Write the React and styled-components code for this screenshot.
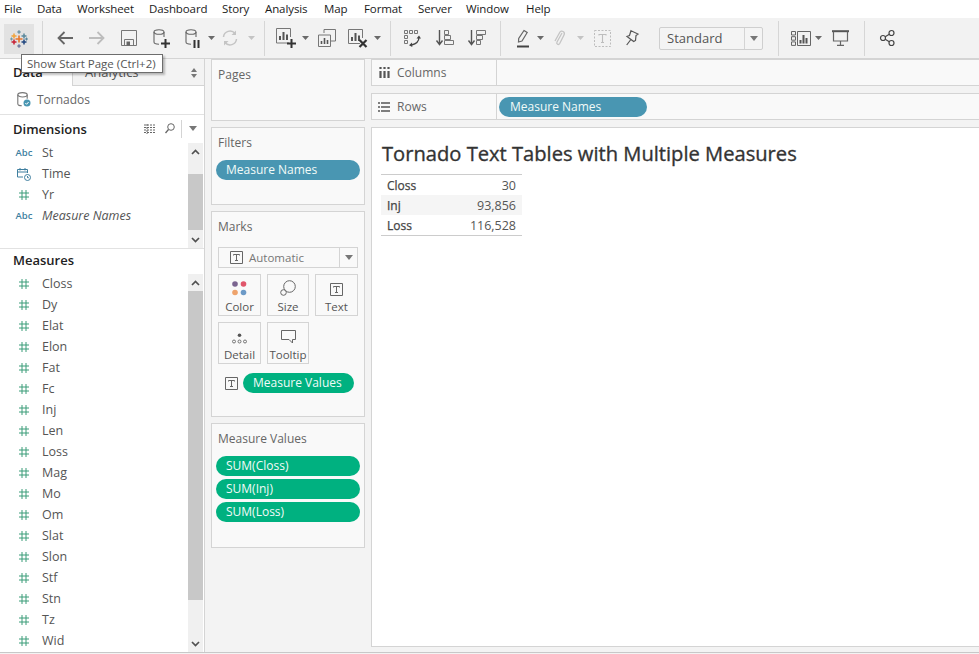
import React from 'react';
import styled, { createGlobalStyle } from 'styled-components';

const Global = createGlobalStyle`
html, body { margin: 0; padding: 0; background: #fff; }
body { font-family: "Open Sans", "Noto Sans", Arial, sans-serif; color: #555; overflow: hidden; }
* { box-sizing: border-box; }
`;

const Page = styled.div`
width: 979px;
height: 654px;
display: flex;
flex-direction: column;
overflow: hidden;
position: relative;
`;

const MenuBar = styled.div`
height: 18px;
flex: none;
display: flex;
align-items: center;
background: #fff;
padding-left: 4px;
`;

const MenuItem = styled.span`
width: ${p => p.$w}px;
font-size: 11.5px;
letter-spacing: -0.1px;
line-height: 18px;
color: #1a1a1a;
white-space: nowrap;
`;

const Toolbar = styled.div`
height: 41px;
flex: none;
display: flex;
align-items: center;
background: #f2f2f2;
padding-left: 4px;
border-bottom: 1px solid #d4d4d4;
`;

const LogoButton = styled.div`
width: 30px;
height: 30px;
margin-top: 1px;
background: #e2e2e2;
display: flex;
align-items: center;
justify-content: center;
`;

const ToolSep = styled.div`
width: 1px;
height: 35px;
flex: none;
margin-left: ${p => p.$ml}px;
background: #d6d6d6;
`;

const Tool = styled.div`
flex: none;
width: ${p => p.$w}px;
margin-left: ${p => p.$ml}px;
height: 24px;
display: flex;
align-items: center;
justify-content: center;
svg { display: block; overflow: visible; }
`;

const Caret = styled.div`
flex: none;
margin-left: ${p => p.$ml}px;
width: 7px;
height: 4px;
clip-path: polygon(0 0, 100% 0, 50% 100%);
background: ${p => (p.$off ? '#c4c4c4' : '#6a6a6a')};
`;

const Select = styled.div`
flex: none;
margin-left: 20px;
width: 104px;
height: 23px;
display: flex;
align-items: center;
background: #f4f4f4;
border: 1px solid #cfcfcf;
border-radius: 2px;
font-size: 13px;
color: #555;
`;

const SelectLabel = styled.span`
flex: 1;
padding-left: 7px;
`;

const SelectArrow = styled.div`
width: 18px;
height: 100%;
border-left: 1px solid #d4d4d4;
display: flex;
align-items: center;
justify-content: center;
`;

const Tip = styled.div`
position: absolute;
left: 21px;
top: 54px;
width: 142px;
height: 19px;
background: #fff;
border: 1px solid #6d6d6d;
box-shadow: 2px 2px 2px rgba(0, 0, 0, 0.25);
font-size: 11.5px;
line-height: 17px;
padding-left: 5px;
color: #555;
white-space: nowrap;
z-index: 5;
`;

const Body = styled.div`
flex: 1;
min-height: 0;
display: flex;
`;

const Side = styled.div`
width: 205px;
flex: none;
display: flex;
flex-direction: column;
background: #fff;
border-right: 1px solid #d4d4d4;
`;

const Tabs = styled.div`
height: 27px;
flex: none;
display: flex;
`;

const DataTab = styled.div`
width: 72px;
padding: 4px 0 0 13px;
font-size: 13px;
font-weight: 600;
color: #222;
`;

const AnalyticsTab = styled.div`
flex: 1;
display: flex;
justify-content: space-between;
padding: 4px 7px 0 12px;
background: #f3f3f3;
border-left: 1px solid #d4d4d4;
border-bottom: 1px solid #d4d4d4;
font-size: 13px;
color: #555;
`;

const SourceRow = styled.div`
height: 29px;
flex: none;
display: flex;
align-items: center;
padding: 0 0 2px 17px;
gap: 6px;
font-size: 12px;
color: #666;
border-bottom: 1px solid #e2e2e2;
`;

const SectionHead = styled.div`
height: ${p => p.$h}px;
flex: none;
display: flex;
align-items: center;
padding: 0 0 ${p => p.$pb || 0}px 13px;
font-size: 13px;
font-weight: 600;
color: #222;
`;

const HeadTools = styled.div`
margin-left: auto;
display: flex;
align-items: center;
gap: 9px;
padding-right: 7px;
`;

const HeadSep = styled.div`
width: 1px;
height: 18px;
background: #d4d4d4;
margin: 0 -2px 0 -3px;
`;

const ListWrap = styled.div`
height: ${p => p.$h}px;
flex: none;
display: flex;
border-bottom: ${p => (p.$line ? '1px solid #e2e2e2' : 'none')};
`;

const List = styled.div`
flex: 1;
padding-top: ${p => p.$top}px;
`;

const Field = styled.div`
height: 21px;
display: flex;
align-items: center;
font-size: 12.5px;
color: #555;
font-style: ${p => (p.$italic ? 'italic' : 'normal')};
`;

const FieldIcon = styled.div`
width: 42px;
flex: none;
display: flex;
justify-content: center;
padding-left: 6px;
`;

const AbcIcon = styled.span`
font-size: 9.5px;
font-style: normal;
font-weight: 600;
color: #3f7f9f;
`;

const Scrollbar = styled.div`
width: 15px;
flex: none;
margin-top: ${p => p.$mt}px;
margin-right: 1px;
display: flex;
flex-direction: column;
background: #f0f0f0;
`;

const ScrollBtn = styled.div`
height: 17px;
flex: none;
display: flex;
align-items: center;
justify-content: center;
`;

const ScrollThumb = styled.div`
background: #c8c8c8;
height: ${p => p.$h}px;
margin-top: ${p => p.$top}px;
flex: none;
`;

const ScrollFill = styled.div`
flex: 1;
`;

const Middle = styled.div`
width: 166px;
flex: none;
background: #f3f3f3;
padding: 0 6px;
display: flex;
flex-direction: column;
gap: 6px;
`;

const Card = styled.div`
height: ${p => p.$h}px;
flex: none;
background: #f9f9f9;
border: 1px solid #d4d4d4;
padding: 6px 4px 0;
`;

const CardTitle = styled.div`
font-size: 12px;
line-height: 17px;
color: #666;
padding-left: 2px;
margin-bottom: ${p => p.$mb || 0}px;
`;

const Pill = styled.div`
height: 20px;
width: ${p => (p.$w ? p.$w + 'px' : '100%')};
flex: none;
border-radius: 10px;
background: ${p => (p.$green ? '#00b180' : '#4996b2')};
color: #f2fbf8;
font-size: 12px;
line-height: 20px;
padding-left: ${p => p.$pl || 10}px;
white-space: nowrap;
`;

const PillStack = styled.div`
display: flex;
flex-direction: column;
gap: 3px;
`;

const MarkSelect = styled.div`
height: 21px;
margin: 0 2px;
display: flex;
align-items: center;
background: #f9f9f9;
border: 1px solid #d4d4d4;
font-size: 11.5px;
color: #777;
`;

const MarkSelectLabel = styled.div`
flex: 1;
display: flex;
align-items: center;
gap: 6px;
padding-left: 11px;
`;

const MarkGrid = styled.div`
margin: 6px 2px 0;
display: grid;
grid-template-columns: 43px 42px 43px;
grid-auto-rows: 42px;
column-gap: 6px;
row-gap: 6px;
`;

const MarkBtn = styled.div`
border: 1px solid #d4d4d4;
display: flex;
flex-direction: column;
align-items: center;
justify-content: flex-end;
font-size: 11.5px;
line-height: 16px;
color: #555;
svg { display: block; margin-bottom: 3px; }
`;

const MarkPillRow = styled.div`
margin-top: 9px;
display: flex;
align-items: center;
padding-left: 9px;
gap: 5px;
`;

const Main = styled.div`
flex: 1;
min-width: 0;
display: flex;
flex-direction: column;
background: #f3f3f3;
gap: 7px;
`;

const Shelf = styled.div`
height: 27px;
flex: none;
display: flex;
background: #f9f9f9;
border-top: 1px solid #d4d4d4;
border-bottom: 1px solid #d4d4d4;
border-left: 1px solid #d4d4d4;
`;

const ShelfLabel = styled.div`
width: 125px;
flex: none;
display: flex;
align-items: center;
gap: 7px;
padding-left: ${p => p.$pl}px;
font-size: 12px;
color: #666;
border-right: 1px solid #d4d4d4;
`;

const ShelfBody = styled.div`
flex: 1;
display: flex;
align-items: center;
padding-left: 2px;
`;

const Canvas = styled.div`
height: 520px;
flex: none;
background: #fff;
border: 1px solid #d4d4d4;
border-right: none;
padding: 13px 0 0 10px;
`;

const Title = styled.div`
font-size: 20.15px;
line-height: 24px;
-webkit-text-stroke: 0.35px #333;
color: #333;
white-space: nowrap;
`;

const Table = styled.div`
width: 141px;
margin: 9px 0 0 -1px;
border-top: 1px solid #ccc;
border-bottom: 1px solid #ccc;
`;

const Row = styled.div`
height: 20px;
display: flex;
justify-content: space-between;
align-items: center;
padding: 0 6px;
font-size: 12.5px;
background: ${p => (p.$alt ? '#f5f5f5' : '#fff')};
color: #555;
`;

const RowName = styled.span`
font-size: 12px;
-webkit-text-stroke: 0.25px #444;
color: #444;
`;

const Footer = styled.div`
height: 2px;
flex: none;
background: #f3f3f3;
border-top: 1px solid #c8c8c8;
`;

const Cross = ({ x, y, c, s = 3, w = 1.5 }) => (
  <path d={`M${x - s} ${y}H${x + s}M${x} ${y - s}V${y + s}`} stroke={c} strokeWidth={w} fill="none" />
);

const Logo = () => (
  <svg width="18" height="18" viewBox="0 0 18 18">
    <Cross x={9} y={9} c="#e8762b" s={3.5} w={1.6} />
    <Cross x={4} y={6} c="#f2a33a" s={2.5} />
    <Cross x={14} y={6} c="#59879b" s={2.5} />
    <Cross x={4} y={12} c="#c72035" s={2.5} />
    <Cross x={14} y={12} c="#1f447e" s={2.5} />
    <Cross x={9} y={2} c="#5b879b" s={1.8} w={1.2} />
    <Cross x={9} y={16} c="#5b6591" s={1.8} w={1.2} />
    <Cross x={1.5} y={9} c="#7099a6" s={1.5} w={1.1} />
    <Cross x={16.5} y={9} c="#5b879b" s={1.5} w={1.1} />
  </svg>
);

const Back = () => (
  <svg width="16" height="14" viewBox="0 0 16 14"><path d="M16 7H1.5M7.5 1L1.5 7l6 6" fill="none" stroke="#666" strokeWidth="1.8" /></svg>
);
const Forward = () => (
  <svg width="16" height="14" viewBox="0 0 16 14"><path d="M0 7h14.5M8.5 1l6 6-6 6" fill="none" stroke="#bdbdbd" strokeWidth="1.8" /></svg>
);
const Save = () => (
  <svg width="16" height="16" viewBox="0 0 16 16"><path d="M.5.5h15v15H.5z" fill="none" stroke="#777" /><path d="M3.5 15.5v-6h9v6" fill="none" stroke="#777" /><path d="M5.5 11.500H9v4H5.5z" fill="#666" /></svg>
);
const Cyl = () => (
  <g fill="none" stroke="#666" strokeWidth="1.1">
    <ellipse cx="6" cy="3" rx="5" ry="2.3" />
    <path d="M1 3v10c0 1.3 2 2.2 5 2.2M11 3v5" />
  </g>
);
const NewSource = () => (
  <svg width="17" height="19" viewBox="0 0 17 19"><Cyl /><path d="M8 14.5h9M12.5 10v9" stroke="#333" strokeWidth="2" /></svg>
);
const PauseSource = () => (
  <svg width="17" height="19" viewBox="0 0 17 19"><Cyl /><path d="M9.5 11v8M13.5 11v8" stroke="#333" strokeWidth="2" /></svg>
);
const Refresh = () => (
  <svg width="16" height="16" viewBox="0 0 16 16"><path d="M1.5 7A6.500 6.500 0 0 1 13 3.5M14.5 9A6.500 6.500 0 0 1 3 12.5" fill="none" stroke="#c4c4c4" strokeWidth="1.5" /><path d="M14 .5V5H9.5zM2 15.5V11h4.500z" fill="#c4c4c4" /></svg>
);
const NewSheet = () => (
  <svg width="20" height="20" viewBox="0 0 20 20"><path d="M13 15H.5V.5h14V9" fill="none" stroke="#777" /><path d="M4 12V8M7.5 12V4M11 12V6.500" stroke="#555" strokeWidth="2" /><path d="M11 15.5h9M15.5 11v9" stroke="#333" strokeWidth="2" /></svg>
);
const Duplicate = () => (
  <svg width="18" height="18" viewBox="0 0 18 18"><path d="M6 4V.5h11.500V12H13" fill="none" stroke="#777" /><path d="M.5 6h12v11.500H.5z" fill="#f2f2f2" stroke="#777" /><path d="M3.5 15v-3M6.5 15V9M9.5 15v-4" stroke="#555" strokeWidth="1.6" /></svg>
);
const ClearSheet = () => (
  <svg width="19" height="19" viewBox="0 0 19 19"><path d="M12 14.5H.5V.5h14V9" fill="none" stroke="#777" /><path d="M4 12V8M7.5 12V4M11 12V6.500" stroke="#555" strokeWidth="2" /><path d="M11.5 11l7 7M18.5 11l-7 7" stroke="#333" strokeWidth="2.2" /></svg>
);
const Swap = () => (
  <svg width="17" height="17" viewBox="0 0 17 17">
    <g fill="none" stroke="#777" strokeWidth="1">
      <path d="M.5.5h3v3h-3zM5.5.5h3v3h-3zM10.5.5h3v3h-3zM.5 5.5h3v3h-3zM.5 10.5h3v3h-3z" />
    </g>
    <path d="M15 7c0 4-3 7-7.500 8" fill="none" stroke="#444" strokeWidth="1.3" />
    <path d="M12.5 8.5L15 5.5l2 3zM8 12.5l-3 2.800 3.300 1.700z" fill="#444" />
  </svg>
);
const SortAsc = () => (
  <svg width="18" height="16" viewBox="0 0 18 16"><path d="M3.5 0v14M.5 10.5l3 4 3-4" fill="none" stroke="#555" strokeWidth="1.4" /><path d="M8.5.5h4v4h-4zM8.5 5.5h6v4h-6zM8.5 10.5h9v4h-9z" fill="none" stroke="#777" /></svg>
);
const SortDesc = () => (
  <svg width="18" height="16" viewBox="0 0 18 16"><path d="M3.5 0v14M.5 10.5l3 4 3-4" fill="none" stroke="#555" strokeWidth="1.4" /><path d="M8.5.5h9v4h-9zM8.5 5.5h6v4h-6zM8.5 10.5h4v4h-4z" fill="none" stroke="#777" /></svg>
);
const Highlighter = () => (
  <svg width="13" height="19" viewBox="0 0 13 19"><path d="M7 1.5l3.200 2L5 12l-3.500 1 .2-3.500z" fill="none" stroke="#666" strokeWidth="1.2" /><path d="M0 17.5h12" stroke="#444" strokeWidth="2" /></svg>
);
const Clip = () => (
  <svg width="11" height="18" viewBox="0 0 11 18"><path d="M8 4L3 13c-1 2 1.500 3.500 2.700 1.500L10 6c1.500-3-2.500-5.500-4.300-2.500L1 12" fill="none" stroke="#c4c4c4" strokeWidth="1.3" /></svg>
);
const TextBox = () => (
  <svg width="17" height="17" viewBox="0 0 17 17"><path d="M.5.5h16v16H.5z" fill="none" stroke="#bdbdbd" strokeDasharray="2 1.5" /><path d="M5 5.5v-1h7v1M8.5 4.500v8M7 12.500h3" fill="none" stroke="#bdbdbd" strokeWidth="1.1" /></svg>
);
const Pin = () => (
  <svg width="13" height="16" viewBox="0 0 13 16"><path d="M5 .7l7 3.300-2 1.500-.5 5-1.800 1L3 8 1 6.500l2.500-1zM4.500 10L.7 15" fill="none" stroke="#555" strokeWidth="1.2" /></svg>
);
const ShowMe = () => (
  <svg width="20" height="15" viewBox="0 0 20 15"><path d="M.5.5h4V4h-4zM.5 5.700h4v3.500h-4zM.5 10.900h4v3.500h-4zM6.500.5h13v14h-13z" fill="none" stroke="#666" /><path d="M9.500 12.500V9M12.500 12.500V4M15.500 12.500V7" stroke="#555" strokeWidth="2" /></svg>
);
const Present = () => (
  <svg width="17" height="16" viewBox="0 0 17 16"><path d="M0 1.200h17" stroke="#555" strokeWidth="2" /><path d="M1.500 1.500V11h14V1.500M8.500 11v4M5 15.300h7" fill="none" stroke="#666" strokeWidth="1.2" /></svg>
);
const Share = () => (
  <svg width="15" height="16" viewBox="0 0 15 16"><g fill="none" stroke="#444" strokeWidth="1.2"><circle cx="3" cy="8" r="2.5" /><circle cx="11.5" cy="3" r="2.5" /><circle cx="11.5" cy="13" r="2.5" /><path d="M5.200 6.700l4.100-2.400M5.200 9.300l4.100 2.400" /></g></svg>
);
const SmallSource = () => (
  <svg width="14" height="15" viewBox="0 0 14 15"><g fill="none" stroke="#777" strokeWidth="1.1"><ellipse cx="5.5" cy="2.800" rx="4.700" ry="2.200" /><path d="M.8 2.800v9c0 1.200 2 2 4 2M10.200 2.800v4" /></g><circle cx="10" cy="11" r="3.5" fill="#4996b2" /><path d="M8.300 11l1.300 1.300 2-2.300" fill="none" stroke="#fff" /></svg>
);
const ListView = () => (
  <svg width="12" height="10" viewBox="0 0 12 10"><path d="M0 1h12M0 3.500h12M0 6h12M0 8.500h12M3 0v10" stroke="#666" strokeWidth="1" strokeDasharray="2 1" fill="none" /></svg>
);
const Search = () => (
  <svg width="10" height="11" viewBox="0 0 10 11"><circle cx="6" cy="4" r="3.300" fill="none" stroke="#666" /><path d="M3.500 6.500L.5 10" stroke="#666" strokeWidth="1.3" /></svg>
);
const Hash = () => (
  <svg width="10" height="10" viewBox="0 0 10 10"><path d="M3 0v10M7 0v10M0 3h10M0 7h10" stroke="#3b9c78" strokeWidth="1" fill="none" /></svg>
);
const DateTime = () => (
  <svg width="14" height="14" viewBox="0 0 14 14"><path d="M6 10H.5V2.500h10V6M.5 5h10M3 1v2.500M8 1v2.500" fill="none" stroke="#3f7f9f" /><circle cx="10.5" cy="10.5" r="3" fill="#fff" stroke="#3f7f9f" /><path d="M10.500 9v1.700h1.300" fill="none" stroke="#3f7f9f" /></svg>
);
const Chevron = ({ up }) => (
  <svg width="9" height="6" viewBox="0 0 9 6"><path d={up ? 'M1 5l3.500-3.500L8 5' : 'M1 1l3.500 3.500L8 1'} fill="none" stroke="#505050" strokeWidth="1.7" /></svg>
);
const TBox = () => (
  <svg width="13" height="13" viewBox="0 0 13 13"><path d="M.5.5h12v12H.5z" fill="none" stroke="#666" /><path d="M3.500 4.500v-1h6v1M6.500 3.500v6M5 9.500h3" fill="none" stroke="#666" /></svg>
);
const DownTri = () => (
  <svg width="8" height="5" viewBox="0 0 8 5"><path d="M0 0h8L4 5z" fill="#777" /></svg>
);
const SortArrows = () => (
  <svg width="6" height="10" viewBox="0 0 6 10" style={{ marginTop: 5 }}><path d="M3 0l3 4H0zM3 10L0 6h6z" fill="#777" /></svg>
);
const ColorDots = () => (
  <svg width="15" height="15" viewBox="0 0 15 15"><circle cx="3" cy="3" r="2.8" fill="#7b6590" /><circle cx="11.5" cy="3" r="2.8" fill="#e0566b" /><circle cx="3" cy="11.5" r="2.8" fill="#eea36c" /><circle cx="11.5" cy="11.5" r="2.8" fill="#6d9ac7" /></svg>
);
const SizeIcon = () => (
  <svg width="16" height="16" viewBox="0 0 16 16"><circle cx="9.5" cy="6.5" r="5.8" fill="none" stroke="#666" /><circle cx="3.5" cy="12.5" r="2.8" fill="#f9f9f9" stroke="#666" /></svg>
);
const DetailIcon = () => (
  <svg width="15" height="11" viewBox="0 0 15 11"><circle cx="7.5" cy="2.2" r="1.8" fill="#555" /><g fill="none" stroke="#666" strokeWidth=".9"><circle cx="2" cy="8.5" r="1.5" /><circle cx="7.5" cy="8.5" r="1.5" /><circle cx="13" cy="8.5" r="1.5" /></g></svg>
);
const TooltipIcon = () => (
  <svg width="15" height="14" viewBox="0 0 15 14"><path d="M.5.5h14v9h-3V13L8 9.500H.5z" fill="none" stroke="#666" /></svg>
);
const ColumnsIcon = () => (
  <svg width="11" height="11" viewBox="0 0 11 11"><path d="M1.500 4v7M5.500 4v7M9.500 4v7M1.500 0v2M5.500 0v2M9.500 0v2" stroke="#555" strokeWidth="2.2" /></svg>
);
const RowsIcon = () => (
  <svg width="12" height="10" viewBox="0 0 12 10"><path d="M3 1h9M3 5h9M3 9h9M0 1h2M0 5h2M0 9h2" stroke="#555" strokeWidth="1.5" /></svg>
);

const menus = [['File', 33], ['Data', 40], ['Worksheet', 72], ['Dashboard', 73], ['Story', 43], ['Analysis', 59], ['Map', 40], ['Format', 54], ['Server', 48], ['Window', 60], ['Help', 30]];
const dimensions = [['St', 'abc'], ['Time', 'date'], ['Yr', 'num'], ['Measure Names', 'abc', true]];
const measures = ['Closs', 'Dy', 'Elat', 'Elon', 'Fat', 'Fc', 'Inj', 'Len', 'Loss', 'Mag', 'Mo', 'Om', 'Slat', 'Slon', 'Stf', 'Stn', 'Tz', 'Wid'];
const rows = [['Closs', '30'], ['Inj', '93,856', true], ['Loss', '116,528']];
const marks = [['Color', <ColorDots />], ['Size', <SizeIcon />], ['Text', <TBox />], ['Detail', <DetailIcon />], ['Tooltip', <TooltipIcon />]];

const FieldRow = ({ name, kind, italic }) => (
  <Field $italic={italic}>
    <FieldIcon>
      {kind === 'abc' && <AbcIcon>Abc</AbcIcon>}
      {kind === 'date' && <DateTime />}
      {kind === 'num' && <Hash />}
    </FieldIcon>
    {name}
  </Field>
);

const Scroll = ({ mt, top, h }) => (
  <Scrollbar $mt={mt}>
    <ScrollBtn><Chevron up /></ScrollBtn>
    <ScrollThumb $top={top} $h={h} />
    <ScrollFill />
    <ScrollBtn><Chevron /></ScrollBtn>
  </Scrollbar>
);

export default function App() {
  return (
    <Page>
      <Global />
      <MenuBar>
        {menus.map(([m, w]) => <MenuItem key={m} $w={w}>{m}</MenuItem>)}
      </MenuBar>
      <Toolbar>
        <LogoButton><Logo /></LogoButton>
        <ToolSep $ml={8} />
        <Tool $ml={14} $w={16}><Back /></Tool>
        <Tool $ml={16} $w={16}><Forward /></Tool>
        <Tool $ml={16} $w={16}><Save /></Tool>
        <Tool $ml={16} $w={17}><NewSource /></Tool>
        <Tool $ml={15} $w={17}><PauseSource /></Tool>
        <Caret $ml={6} />
        <Tool $ml={7} $w={16}><Refresh /></Tool>
        <Caret $ml={10} $off />
        <ToolSep $ml={9} />
        <Tool $ml={11} $w={20}><NewSheet /></Tool>
        <Caret $ml={6} />
        <Tool $ml={9} $w={18}><Duplicate /></Tool>
        <Tool $ml={12} $w={19}><ClearSheet /></Tool>
        <Caret $ml={7} />
        <ToolSep $ml={9} />
        <Tool $ml={13} $w={17}><Swap /></Tool>
        <Tool $ml={15} $w={18}><SortAsc /></Tool>
        <Tool $ml={14} $w={18}><SortDesc /></Tool>
        <ToolSep $ml={14} />
        <Tool $ml={16} $w={13}><Highlighter /></Tool>
        <Caret $ml={7} />
        <Tool $ml={10} $w={11}><Clip /></Tool>
        <Caret $ml={12} $off />
        <Tool $ml={10} $w={17}><TextBox /></Tool>
        <Tool $ml={15} $w={13}><Pin /></Tool>
        <Select>
          <SelectLabel>Standard</SelectLabel>
          <SelectArrow><DownTri /></SelectArrow>
        </Select>
        <ToolSep $ml={15} />
        <Tool $ml={12} $w={20}><ShowMe /></Tool>
        <Caret $ml={4} />
        <Tool $ml={10} $w={17}><Present /></Tool>
        <ToolSep $ml={15} />
        <Tool $ml={15} $w={15}><Share /></Tool>
      </Toolbar>
      <Tip>Show Start Page (Ctrl+2)</Tip>
      <Body>
        <Side>
          <Tabs>
            <DataTab>Data</DataTab>
            <AnalyticsTab>Analytics<SortArrows /></AnalyticsTab>
          </Tabs>
          <SourceRow><SmallSource />Tornados</SourceRow>
          <SectionHead $h={27}>
            Dimensions
            <HeadTools><ListView /><Search /><HeadSep /><DownTri /></HeadTools>
          </SectionHead>
          <ListWrap $h={107} $line>
            <List $top={0}>
              {dimensions.map(([n, k, i]) => <FieldRow key={n} name={n} kind={k} italic={i} />)}
            </List>
            <Scroll mt={1} top={14} h={56} />
          </ListWrap>
          <SectionHead $h={23} $pb={2}>Measures</SectionHead>
          <ListWrap $h={380}>
            <List $top={1}>
              {measures.map(m => <FieldRow key={m} name={m} kind="num" />)}
            </List>
            <Scroll mt={2} top={0} h={309} />
          </ListWrap>
        </Side>
        <Middle>
          <Card $h={62}><CardTitle>Pages</CardTitle></Card>
          <Card $h={78}>
            <CardTitle $mb={9}>Filters</CardTitle>
            <Pill>Measure Names</Pill>
          </Card>
          <Card $h={206}>
            <CardTitle $mb={12}>Marks</CardTitle>
            <MarkSelect>
              <MarkSelectLabel><TBox />Automatic</MarkSelectLabel>
              <SelectArrow><DownTri /></SelectArrow>
            </MarkSelect>
            <MarkGrid>
              {marks.map(([label, icon]) => <MarkBtn key={label}>{icon}{label}</MarkBtn>)}
            </MarkGrid>
            <MarkPillRow>
              <TBox />
              <Pill $green $w={111}>Measure Values</Pill>
            </MarkPillRow>
          </Card>
          <Card $h={125}>
            <CardTitle $mb={9}>Measure Values</CardTitle>
            <PillStack>
              <Pill $green>SUM(Closs)</Pill>
              <Pill $green>SUM(Inj)</Pill>
              <Pill $green>SUM(Loss)</Pill>
            </PillStack>
          </Card>
        </Middle>
        <Main>
          <Shelf>
            <ShelfLabel $pl={7}><ColumnsIcon />Columns</ShelfLabel>
            <ShelfBody />
          </Shelf>
          <Shelf>
            <ShelfLabel $pl={6}><RowsIcon />Rows</ShelfLabel>
            <ShelfBody><Pill $w={148} $pl={11}>Measure Names</Pill></ShelfBody>
          </Shelf>
          <Canvas>
            <Title>Tornado Text Tables with Multiple Measures</Title>
            <Table>
              {rows.map(([n, v, alt]) => (
                <Row key={n} $alt={alt}><RowName>{n}</RowName><span>{v}</span></Row>
              ))}
            </Table>
          </Canvas>
        </Main>
      </Body>
      <Footer />
    </Page>
  );
}
